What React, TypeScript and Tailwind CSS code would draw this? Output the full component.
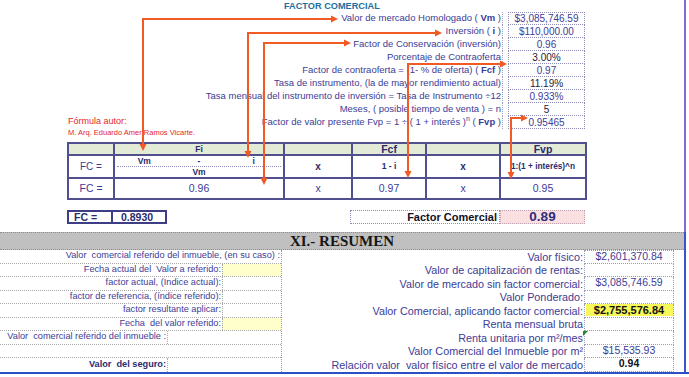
import React from "react";

// Hoja de avalúo: factor comercial + resumen
const topRows: { label: React.ReactNode; value: string; dark?: boolean }[] = [
  { label: <>Valor de mercado Homologado ( <b>Vm</b> )</>, value: "$3,085,746.59" },
  { label: <>Inversión ( <b>i</b> )</>, value: "$110,000.00" },
  { label: "Factor de Conservación (inversión)", value: "0.96" },
  { label: "Porcentaje de Contraoferta", value: "3.00%", dark: true },
  { label: <>Factor de contraoferta = (1- % de oferta) ( <b>Fcf</b> )</>, value: "0.97" },
  { label: "Tasa de instrumento, (la de mayor rendimiento actual)", value: "11.19%", dark: true },
  { label: "Tasa mensual del instrumento de inversión = Tasa de Instrumento ÷12", value: "0.933%" },
  { label: "Meses, ( posible tiempo de venta ) = n", value: "5", dark: true },
  {
    label: (
      <>
        Factor de valor presente Fvp = 1 ÷ ( 1 + interés )<span className="relative -top-[4px] text-[7px]">n</span>{" "}
        ( <b>Fvp</b> )
      </>
    ),
    value: "0.95465",
  },
];

const leftRows: { label: string; cell?: "short" | "long" | "none"; yellow?: boolean; bold?: boolean }[] = [
  { label: "Valor  comercial referido del inmueble, (en su caso) :", cell: "none" },
  { label: "Fecha actual del  Valor a referido:", cell: "short", yellow: true },
  { label: "factor actual, (Indice actual):", cell: "short" },
  { label: "factor de referencia, (índice referido):", cell: "short" },
  { label: "factor resultante aplicar:", cell: "short" },
  { label: "Fecha  del valor referido:", cell: "short", yellow: true },
  { label: "Valor  comercial referido del inmueble :", cell: "long" },
  { label: "", cell: "none" },
  { label: "Valor  del seguro:", cell: "long", bold: true },
];

const rightRows: { label: string; value?: string; strong?: boolean; highlight?: boolean; marker?: boolean }[] = [
  { label: "Valor físico:", value: "$2,601,370.84" },
  { label: "Valor de capitalización de rentas:" },
  { label: "Valor de mercado sin factor comercial:", value: "$3,085,746.59" },
  { label: "Valor Ponderado:" },
  { label: "Valor Comercial, aplicando factor comercial:", value: "$2,755,576.84", highlight: true },
  { label: "Renta mensual bruta" },
  { label: "Renta unitaria por m²/mes", marker: true },
  { label: "Valor Comercial del Inmueble por m²", value: "$15,535.93" },
  { label: "Relación valor  valor físico entre el valor de mercado", value: "0.94", strong: true },
];

const Arrows = () => (
  <svg className="absolute left-0 top-0 pointer-events-none" width="689" height="232">
    <g stroke="#f15a24" strokeWidth="2" fill="none">
      <path d="M143 146 V19 H332" />
      <path d="M248 153 V33 H436" />
      <path d="M264 180 V43 H345" />
      <path d="M408 173 V64 H501" />
      <path d="M511 174 V118 H522" />
    </g>
    <g fill="#f15a24">
      <polygon points="338,19 331,15.5 331,22.5" />
      <polygon points="143,151 139.5,144 146.5,144" />
      <polygon points="442,33 435,29.5 435,36.5" />
      <polygon points="248,158 244.5,151 251.5,151" />
      <polygon points="351,43 344,39.5 344,46.5" />
      <polygon points="264,185 260.5,178 267.5,178" />
      <polygon points="507,64 500,60.5 500,67.5" />
      <polygon points="408,178 404.5,171 411.5,171" />
      <polygon points="528,118 521,114.5 521,121.5" />
      <polygon points="511,179 507.5,172 514.5,172" />
    </g>
  </svg>
);

export default function App() {
  const cell = "border-2 border-[#50508f]";
  return (
    <div className="w-[689px] h-[377px] overflow-hidden bg-white font-['Liberation_Sans',Arial,sans-serif] text-[#3c3c96]">
      {/* factor comercial */}
      <div className="relative w-[686px] h-[232px] border-r-2 border-[#7b6fd9]">
        <div className="h-[12px] pl-[284px] text-[9.2px] leading-[12px] font-bold text-[#1e6fa0]">FACTOR COMERCIAL</div>

        <div className="flex flex-col">
          {topRows.map((r, i) => (
            <div key={i} className="flex h-[13px] items-stretch">
              <div className="w-[503px] flex items-center justify-between text-[9.5px] pr-[1px] border-r border-dotted border-[#a0a0c0]">
                <span className="pl-[68px] self-start text-[9px] leading-[11px] text-[#e5262b]">
                  {i === 8 ? "Fórmula autor:" : ""}
                </span>
                <span className="whitespace-pre">{r.label}</span>
              </div>
              <div
                className={`ml-[5px] w-[77px] flex items-center justify-center text-[10px] border-x border-b border-dotted border-[#8c8cb4] ${
                  i === 0 ? "border-t" : ""
                } ${r.dark ? "text-[#1c1c3a]" : ""}`}
              >
                {r.value}
              </div>
            </div>
          ))}
        </div>

        <div className="h-[13px] pl-[68px] text-[7.5px] leading-[8px] text-[#e5262b]">M. Arq. Eduardo Amer Ramos Vicarte.</div>

        <div className="ml-[67px] w-[518px]">
          <table className="table-fixed border-collapse w-[518px] text-center">
            <colgroup>
              <col className="w-[46px]" />
              <col className="w-[170px]" />
              <col className="w-[68px]" />
              <col className="w-[74px]" />
              <col className="w-[74px]" />
              <col className="w-[86px]" />
            </colgroup>
            <tbody>
              <tr className="h-[12px] bg-[#e3ebd6] font-bold text-[#2b2b6e]">
                <td className={cell}></td>
                <td className={`${cell} text-[8.5px] leading-[8px]`}>Fi</td>
                <td className={cell}></td>
                <td className={`${cell} text-[10.5px] leading-[10px]`}>Fcf</td>
                <td className={cell}></td>
                <td className={`${cell} text-[10.5px] leading-[10px]`}>Fvp</td>
              </tr>
              <tr className="h-[23px]">
                <td className={`${cell} text-[10px]`}>FC =</td>
                <td className={`${cell} p-0`}>
                  <div className="flex flex-col text-[8.5px] font-bold text-[#2b2b6e]">
                    <div className="grid grid-cols-3 h-[11px] leading-[10px] border-b border-dotted border-[#8c8cb4] mx-[2px]">
                      <span>Vm</span>
                      <span>-</span>
                      <span>i</span>
                    </div>
                    <span className="leading-[10px]">Vm</span>
                  </div>
                </td>
                <td className={`${cell} text-[10px] font-bold text-[#2b2b6e]`}>x</td>
                <td className={`${cell} text-[8.5px] font-bold text-[#2b2b6e]`}>1 - i</td>
                <td className={`${cell} text-[10px] font-bold text-[#2b2b6e]`}>x</td>
                <td className={`${cell} text-[8.3px] font-bold text-[#2b2b6e] whitespace-nowrap`}>1:(1 + interés)^n</td>
              </tr>
              <tr className="h-[21px] text-[10.5px]">
                <td className={cell}>FC =</td>
                <td className={cell}>0.96</td>
                <td className={cell}>x</td>
                <td className={cell}>0.97</td>
                <td className={cell}>x</td>
                <td className={cell}>0.95</td>
              </tr>
            </tbody>
          </table>
        </div>

        <div className="mt-[10px] flex h-[14px]">
          <div className="ml-[67px] w-[100px] flex border-2 border-[#3e3e86] text-[10.5px] font-bold text-[#2b2b6e]">
            <span className="w-[44px] pl-[5px] border-r-2 border-[#3e3e86] leading-[10px]">FC =</span>
            <span className="pl-[8px] leading-[10px]">0.8930</span>
          </div>
          <div className="ml-[183px] w-[150px] flex items-center justify-end pr-[2px] border border-dotted border-[#8c8cb4] text-[11px] font-bold text-[#111122]">
            Factor Comercial
          </div>
          <div className="w-[85px] flex items-center justify-center bg-[#fbe0e2] border border-dotted border-[#c0a0b0] text-[13.5px] font-bold text-[#2e2e7e]">
            0.89
          </div>
        </div>

        <Arrows />
      </div>

      {/* resumen */}
      <div className="w-[686px] border-r-2 border-[#3a55c8]">
        <div className="h-[18px] bg-[#c0c0c0] border-y border-dotted border-[#8e8e8e] flex items-center justify-center">
          <span className="font-['Liberation_Serif',serif] font-bold text-[15px] leading-[16px] text-[#161616]">XI.- RESUMEN</span>
        </div>
        <div className="flex">
          <div className="w-[282px] border-r border-dotted border-[#9a9a9a]">
            {leftRows.map((r, i) => (
              <div
                key={i}
                className="flex h-[13.5px] border-b border-dotted border-[#a8a8a8] text-[9.2px] last:border-b-0"
              >
                <span
                  className={`flex-1 flex items-center justify-end pr-[1px] whitespace-pre ${
                    r.bold ? "font-bold text-[#2b2b6e]" : ""
                  }`}
                >
                  {r.label}
                </span>
                {r.cell === "short" && (
                  <span
                    className={`w-[59px] border-l border-dotted border-[#a8a8a8] ${r.yellow ? "bg-[#ffffcc]" : ""}`}
                  />
                )}
                {r.cell === "long" && <span className="w-[114px] border-l border-dotted border-[#a8a8a8]" />}
              </div>
            ))}
          </div>
          <div className="flex-1">
            {rightRows.map((r, i) => (
              <div key={i} className="flex h-[13.5px] text-[10.8px]">
                <span className="relative flex-1 flex items-center justify-end pr-[1px] whitespace-pre">
                  {r.label}
                  {r.marker && (
                    <span className="absolute right-[-4px] top-0 w-0 h-0 border-t-[5px] border-t-[#1f8a2e] border-r-[5px] border-r-transparent" />
                  )}
                </span>
                <span
                  className={`w-[90px] mr-[10px] flex items-center justify-center text-[10.5px] border-x border-b border-dotted border-[#9a9ab8] ${
                    i === 0 ? "border-t" : ""
                  } ${r.strong ? "font-bold text-[#111122]" : ""}`}
                >
                  {r.highlight ? (
                    <span className="w-[87px] h-[12px] bg-[#f7f759] flex items-center justify-center font-bold text-[11px] text-[#111111]">
                      {r.value}
                    </span>
                  ) : (
                    r.value
                  )}
                </span>
              </div>
            ))}
          </div>
        </div>
      </div>
      <div className="w-[689px] h-[2px] bg-[#2d4fc4]" />
    </div>
  );
}
